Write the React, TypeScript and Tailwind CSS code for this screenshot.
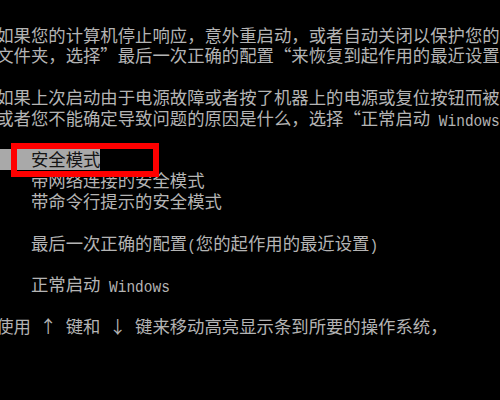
import React from "react";

// one half-width cell = 8.68px, one full-width cell = 17.36px
const Cjk: React.FC<{ children: React.ReactNode }> = ({ children }) => (
  <span className="font-['Noto_Sans_CJK_SC',sans-serif] text-[17.36px] leading-[20.8px]">
    {children}
  </span>
);

const Mono: React.FC<{ children: React.ReactNode }> = ({ children }) => (
  <span className="inline-block scale-y-[1.2] font-['Liberation_Mono',monospace] text-[14.47px] leading-[20.8px] whitespace-pre">
    {children}
  </span>
);

const Sp = () => <span className="inline-block w-[8.68px]" />;
const Indent = () => <span className="inline-block w-[34.72px]" />;

const Cell: React.FC<{ children: React.ReactNode; align: string }> = ({
  children,
  align,
}) => (
  <span
    className={`inline-block w-[17.36px] overflow-visible font-['Noto_Sans_CJK_SC',sans-serif] text-[17.36px] leading-[20.8px] ${align}`}
  >
    {children}
  </span>
);

const Line: React.FC<{ children?: React.ReactNode; className?: string }> = ({
  children,
  className = "",
}) => (
  <div className={`h-[20.8px] leading-[20.8px] whitespace-nowrap ${className}`}>
    {children}
  </div>
);

export default function App() {
  return (
    <div className="relative w-[500px] h-[400px] overflow-hidden bg-black text-[#b4b4b4]">
      <div className="mt-[-17px] ml-[-3.8px]">
        <Line className="-translate-y-[3px]">
          <Cjk>很抱歉，</Cjk>
          <Mono>Windows </Mono>
          <Cjk>未能成功启动。原因</Cjk>
        </Line>
        <Line />
        <Line>
          <Cjk>如果您的计算机停止响应，意外重启动，或者自动关闭以保护您的</Cjk>
        </Line>
        <Line>
          <Cjk>文件夹，选择</Cjk>
          <Cell align="text-left">”</Cell>
          <Cjk>最后一次正确的配置</Cjk>
          <Cell align="text-right">“</Cell>
          <Cjk>来恢复到起作用的最近设置</Cjk>
        </Line>
        <Line />
        <Line>
          <Cjk>如果上次启动由于电源故障或者按了机器上的电源或复位按钮而被</Cjk>
        </Line>
        <Line>
          <Cjk>或者您不能确定导致问题的原因是什么，选择</Cjk>
          <Cell align="text-right">“</Cell>
          <Cjk>正常启动</Cjk>
          <Mono> Windows</Mono>
        </Line>
        <Line />
        <Line>
          <span className="inline-block h-[20.8px] bg-[#a9a9a9] text-[#141414]">
            <Indent />
            <Cjk>安全模式</Cjk>
          </span>
        </Line>
        <Line>
          <Indent />
          <Cjk>带网络连接的安全模式</Cjk>
        </Line>
        <Line>
          <Indent />
          <Cjk>带命令行提示的安全模式</Cjk>
        </Line>
        <Line />
        <Line>
          <Indent />
          <Cjk>最后一次正确的配置</Cjk>
          <Mono>(</Mono>
          <Cjk>您的起作用的最近设置</Cjk>
          <Mono>)</Mono>
        </Line>
        <Line />
        <Line>
          <Indent />
          <Cjk>正常启动</Cjk>
          <Mono> Windows</Mono>
        </Line>
        <Line />
        <Line>
          <Cjk>使用</Cjk>
          <Sp />
          <Cell align="text-center">↑</Cell>
          <Sp />
          <Cjk>键和</Cjk>
          <Sp />
          <Cell align="text-center">↓</Cell>
          <Sp />
          <Cjk>键来移动高亮显示条到所要的操作系统，</Cjk>
        </Line>
      </div>

      {/* red marker drawn over the screenshot */}
      <div className="absolute left-[11px] top-[143px] w-[148px] h-[34px] border-[6px] border-[#ff0000]" />
    </div>
  );
}
